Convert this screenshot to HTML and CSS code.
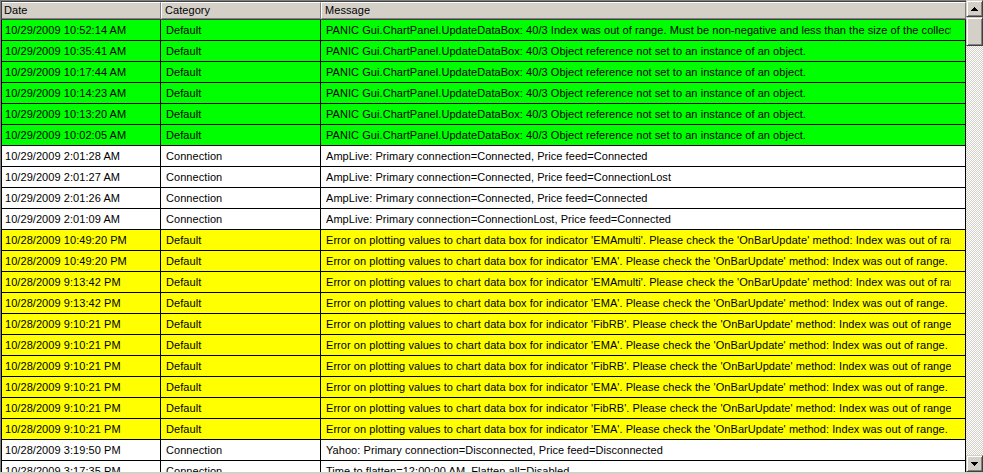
FILE: index.html
```html
<!DOCTYPE html>
<html>
<head>
<meta charset="utf-8">
<link rel="stylesheet" href="styles.css">
</head>
<body>
<div class="window">
  <div class="grid">
    <div class="header">
      <div class="hcell c-date">Date</div>
      <div class="hcell c-cat">Category</div>
      <div class="hcell c-msg">Message</div>
    </div>
    <div class="rows">
      <div class="row green"><div class="cell c-date">10/29/2009 10:52:14 AM</div><div class="cell c-cat">Default</div><div class="cell c-msg"><span class="txt">PANIC Gui.ChartPanel.UpdateDataBox: 40/3 Index was out of range. Must be non-negative and less than the size of the collection.</span></div></div>
      <div class="row green"><div class="cell c-date">10/29/2009 10:35:41 AM</div><div class="cell c-cat">Default</div><div class="cell c-msg"><span class="txt">PANIC Gui.ChartPanel.UpdateDataBox: 40/3 Object reference not set to an instance of an object.</span></div></div>
      <div class="row green"><div class="cell c-date">10/29/2009 10:17:44 AM</div><div class="cell c-cat">Default</div><div class="cell c-msg"><span class="txt">PANIC Gui.ChartPanel.UpdateDataBox: 40/3 Object reference not set to an instance of an object.</span></div></div>
      <div class="row green"><div class="cell c-date">10/29/2009 10:14:23 AM</div><div class="cell c-cat">Default</div><div class="cell c-msg"><span class="txt">PANIC Gui.ChartPanel.UpdateDataBox: 40/3 Object reference not set to an instance of an object.</span></div></div>
      <div class="row green"><div class="cell c-date">10/29/2009 10:13:20 AM</div><div class="cell c-cat">Default</div><div class="cell c-msg"><span class="txt">PANIC Gui.ChartPanel.UpdateDataBox: 40/3 Object reference not set to an instance of an object.</span></div></div>
      <div class="row green"><div class="cell c-date">10/29/2009 10:02:05 AM</div><div class="cell c-cat">Default</div><div class="cell c-msg"><span class="txt">PANIC Gui.ChartPanel.UpdateDataBox: 40/3 Object reference not set to an instance of an object.</span></div></div>
      <div class="row"><div class="cell c-date">10/29/2009 2:01:28 AM</div><div class="cell c-cat">Connection</div><div class="cell c-msg"><span class="txt">AmpLive: Primary connection=Connected, Price feed=Connected</span></div></div>
      <div class="row"><div class="cell c-date">10/29/2009 2:01:27 AM</div><div class="cell c-cat">Connection</div><div class="cell c-msg"><span class="txt">AmpLive: Primary connection=Connected, Price feed=ConnectionLost</span></div></div>
      <div class="row"><div class="cell c-date">10/29/2009 2:01:26 AM</div><div class="cell c-cat">Connection</div><div class="cell c-msg"><span class="txt">AmpLive: Primary connection=Connected, Price feed=Connected</span></div></div>
      <div class="row"><div class="cell c-date">10/29/2009 2:01:09 AM</div><div class="cell c-cat">Connection</div><div class="cell c-msg"><span class="txt">AmpLive: Primary connection=ConnectionLost, Price feed=Connected</span></div></div>
      <div class="row yellow"><div class="cell c-date">10/28/2009 10:49:20 PM</div><div class="cell c-cat">Default</div><div class="cell c-msg"><span class="txt">Error on plotting values to chart data box for indicator 'EMAmulti'. Please check the 'OnBarUpdate' method: Index was out of range.</span></div></div>
      <div class="row yellow"><div class="cell c-date">10/28/2009 10:49:20 PM</div><div class="cell c-cat">Default</div><div class="cell c-msg"><span class="txt">Error on plotting values to chart data box for indicator 'EMA'. Please check the 'OnBarUpdate' method: Index was out of range.</span></div></div>
      <div class="row yellow"><div class="cell c-date">10/28/2009 9:13:42 PM</div><div class="cell c-cat">Default</div><div class="cell c-msg"><span class="txt">Error on plotting values to chart data box for indicator 'EMAmulti'. Please check the 'OnBarUpdate' method: Index was out of range.</span></div></div>
      <div class="row yellow"><div class="cell c-date">10/28/2009 9:13:42 PM</div><div class="cell c-cat">Default</div><div class="cell c-msg"><span class="txt">Error on plotting values to chart data box for indicator 'EMA'. Please check the 'OnBarUpdate' method: Index was out of range.</span></div></div>
      <div class="row yellow"><div class="cell c-date">10/28/2009 9:10:21 PM</div><div class="cell c-cat">Default</div><div class="cell c-msg"><span class="txt">Error on plotting values to chart data box for indicator 'FibRB'. Please check the 'OnBarUpdate' method: Index was out of range.</span></div></div>
      <div class="row yellow"><div class="cell c-date">10/28/2009 9:10:21 PM</div><div class="cell c-cat">Default</div><div class="cell c-msg"><span class="txt">Error on plotting values to chart data box for indicator 'EMA'. Please check the 'OnBarUpdate' method: Index was out of range.</span></div></div>
      <div class="row yellow"><div class="cell c-date">10/28/2009 9:10:21 PM</div><div class="cell c-cat">Default</div><div class="cell c-msg"><span class="txt">Error on plotting values to chart data box for indicator 'FibRB'. Please check the 'OnBarUpdate' method: Index was out of range.</span></div></div>
      <div class="row yellow"><div class="cell c-date">10/28/2009 9:10:21 PM</div><div class="cell c-cat">Default</div><div class="cell c-msg"><span class="txt">Error on plotting values to chart data box for indicator 'EMA'. Please check the 'OnBarUpdate' method: Index was out of range.</span></div></div>
      <div class="row yellow"><div class="cell c-date">10/28/2009 9:10:21 PM</div><div class="cell c-cat">Default</div><div class="cell c-msg"><span class="txt">Error on plotting values to chart data box for indicator 'FibRB'. Please check the 'OnBarUpdate' method: Index was out of range.</span></div></div>
      <div class="row yellow"><div class="cell c-date">10/28/2009 9:10:21 PM</div><div class="cell c-cat">Default</div><div class="cell c-msg"><span class="txt">Error on plotting values to chart data box for indicator 'EMA'. Please check the 'OnBarUpdate' method: Index was out of range.</span></div></div>
      <div class="row"><div class="cell c-date">10/28/2009 3:19:50 PM</div><div class="cell c-cat">Connection</div><div class="cell c-msg"><span class="txt">Yahoo: Primary connection=Disconnected, Price feed=Disconnected</span></div></div>
      <div class="row"><div class="cell c-date">10/28/2009 3:17:35 PM</div><div class="cell c-cat">Connection</div><div class="cell c-msg"><span class="txt">Time to flatten=12:00:00 AM, Flatten all=Disabled</span></div></div>
    </div>
  </div>
  <div class="scrollbar">
    <div class="sbtn"><svg width="7" height="4" viewBox="0 0 7 4"><path d="M3 0h1v1h1v1h1v1h1v1H0V3h1V2h1V1h1z" fill="#000"/></svg></div>
    <div class="thumb"></div>
    <div class="track"></div>
    <div class="sbtn"><svg width="7" height="4" viewBox="0 0 7 4"><path d="M0 0h7v1H6v1H5v1H4v1H3V3H2V2H1V1H0z" fill="#000"/></svg></div>
  </div>
</div>
</body>
</html>
```

FILE: styles.css
```css
* { box-sizing: border-box; }
html, body {
  margin: 0;
  padding: 0;
  width: 983px;
  height: 474px;
  overflow: hidden;
  background: #d4d0c8;
  font-family: "Liberation Sans", Arial, sans-serif;
  font-size: 11px;
  letter-spacing: 0.06px;
  color: #000;
}
.window {
  display: flex;
  height: 472px;
}
.grid {
  width: 966px;
  height: 472px;
  overflow: hidden;
  border-top: 1px solid #808080;
  border-left: 1px solid #808080;
  display: flex;
  flex-direction: column;
  background: #fff;
}
.header {
  display: flex;
  height: 19px;
  flex: none;
  border-top: 1px solid #404040;
  border-left: 1px solid #404040;
  border-bottom: 1px solid #404040;
  background: #d4d0c8;
}
.hcell {
  height: 17px;
  line-height: 15px;
  border-top: 1px solid #fff;
  border-left: 1px solid #fff;
  border-right: 1px solid #808080;
  border-bottom: 1px solid #808080;
  white-space: nowrap;
  overflow: hidden;
}
.hcell.c-date { width: 159px; padding-left: 2px; border-left: none; }
.hcell.c-cat { width: 160px; padding-left: 3px; }
.hcell.c-msg { flex: 1; padding-left: 3px; }
.rows {
  flex: 1;
  overflow: hidden;
  border-left: 1px solid #000;
}
.row {
  display: flex;
  height: 21px;
  border-bottom: 1px solid #000;
  background: #fff;
}
.row.green { background: #00ff00; }
.row.yellow { background: #ffff00; }
.cell {
  line-height: 20px;
  white-space: nowrap;
  overflow: hidden;
  border-right: 1px solid #000;
}
.cell.c-date { width: 159px; padding-left: 3px; }
.cell.c-cat { width: 160px; padding-left: 5px; }
.cell.c-msg { flex: 1; min-width: 0; padding-left: 5px; padding-right: 14px; }
.txt {
  display: block;
  overflow: hidden;
  white-space: nowrap;
}
.scrollbar {
  width: 17px;
  height: 472px;
  display: flex;
  flex-direction: column;
}
.sbtn, .thumb {
  background: #d4d0c8;
  border-top: 1px solid #d4d0c8;
  border-left: 1px solid #d4d0c8;
  border-right: 1px solid #404040;
  border-bottom: 1px solid #404040;
  box-shadow: inset 1px 1px 0 #fff, inset -1px -1px 0 #808080;
}
.sbtn {
  height: 17px;
  flex: none;
  display: flex;
  align-items: center;
  justify-content: center;
}
.sbtn svg { display: block; }
.thumb { height: 29px; flex: none; }
.track {
  flex: 1;
  background-color: #fff;
  background-image: conic-gradient(#d4d0c8 25%, #fff 0 50%, #d4d0c8 0 75%, #fff 0);
  background-size: 2px 2px;
}
```
